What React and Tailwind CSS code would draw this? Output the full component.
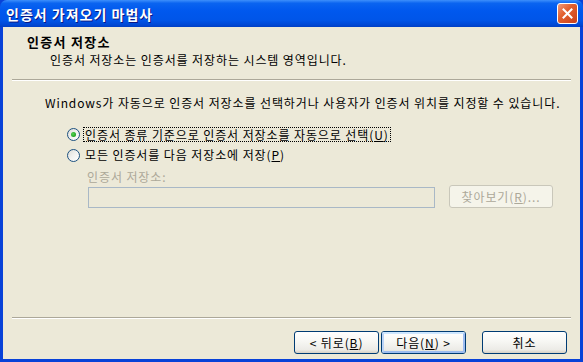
import React from "react";

function Radio({ checked }) {
  return (
    <span className="relative inline-flex items-center justify-center w-[13px] h-[13px] rounded-full border border-[#1C5180] bg-[linear-gradient(135deg,#DCDCD7_0%,#F2F2F0_50%,#FFFFFF_100%)] shrink-0">
      {checked && (
        <span className="w-[5px] h-[5px] rounded-full bg-[radial-gradient(circle_at_40%_40%,#55D455_0%,#21A121_70%,#1A8A1A_100%)]" />
      )}
    </span>
  );
}

function XPButton({ children, isDefault, disabled, className = "" }) {
  if (disabled) {
    return (
      <div
        className={`h-[23px] rounded-[3px] border border-[#C9C7BA] bg-[#F5F4EA] flex items-center justify-center text-[#ACA899] ${className}`}
      >
        {children}
      </div>
    );
  }
  return (
    <div
      className={`h-[23px] rounded-[3px] border border-[#003C74] bg-[linear-gradient(180deg,#FFFFFF_0%,#F8F8F5_40%,#ECEBE6_85%,#D6D0C5_100%)] flex items-center justify-center text-black ${className}`}
    >
      {isDefault ? (
        <div className="w-full h-full rounded-[2px] border-2 border-[#9DBCF0] border-t-[#CEE7FF] border-l-[#BCD4F6] flex items-center justify-center">
          {children}
        </div>
      ) : (
        children
      )}
    </div>
  );
}

export default function App() {
  return (
    <div className="w-[583px] h-[362px] flex flex-col bg-[#0842D8] font-['Noto_Sans_CJK_KR','Gulim',sans-serif] text-[12px] leading-[14px] tracking-[0.9px] text-black select-none">
      {/* Title bar */}
      <div className="h-[27px] shrink-0 flex items-center pl-[6px] pr-[5px] rounded-t-[7px] bg-[linear-gradient(180deg,#3D8FFB_0%,#0A64F0_12%,#0058EE_40%,#0055E8_75%,#0048D4_92%,#003FC4_100%)]">
        <span className="text-white font-bold text-[14px] leading-[16px] tracking-[1px] [text-shadow:1px_1px_0_#0A1883]">
          인증서 가져오기 마법사
        </span>
        <div className="ml-auto w-[21px] h-[21px] rounded-[3px] border border-white bg-[linear-gradient(135deg,#F09A7C_0%,#E2602F_40%,#C8401A_100%)] flex items-center justify-center">
          <svg width="11" height="11" viewBox="0 0 11 11">
            <path d="M1.5 1.5 L9.5 9.5 M9.5 1.5 L1.5 9.5" stroke="white" strokeWidth="2" strokeLinecap="square" />
          </svg>
        </div>
      </div>

      {/* Client area */}
      <div className="flex-1 mx-[3px] mb-[3px] bg-[#ECE9D8] flex flex-col">
        {/* Header */}
        <div className="h-[52px] shrink-0 pt-[8px] flex flex-col">
          <div className="pl-[24px] font-bold text-[13px] leading-[14px] tracking-[1.3px]">인증서 저장소</div>
          <div className="pl-[47px] mt-[4px]">인증서 저장소는 인증서를 저장하는 시스템 영역입니다.</div>
        </div>
        <div className="mx-[9px] h-[2px] border-t border-t-[#ACA899] border-b border-b-white shrink-0" />

        {/* Content */}
        <div className="flex-1 flex flex-col pt-[15px]">
          <div className="pl-[42px]">
            Windows가 자동으로 인증서 저장소를 선택하거나 사용자가 인증서 위치를 지정할 수 있습니다.
          </div>
          <div className="mt-[16px] pl-[64px] h-[16px] flex items-center">
            <Radio checked />
            <span className="ml-[3px] px-[1px] border border-dotted border-black leading-[13px]">
              인증서 종류 기준으로 인증서 저장소를 자동으로 선택(<u>U</u>)
            </span>
          </div>
          <div className="mt-[5px] pl-[64px] h-[16px] flex items-center">
            <Radio />
            <span className="ml-[4px] px-[1px]">모든 인증서를 다음 저장소에 저장(<u>P</u>)</span>
          </div>
          <div className="mt-[7px] pl-[84px] text-[#ACA899]">인증서 저장소:</div>
          <div className="mt-[1px] pl-[85px] flex items-end">
            <div className="w-[347px] h-[21px] border border-[#A9B8C6] bg-[#ECE9D8]" />
            <XPButton disabled className="ml-[14px] w-[104px]">
              <span>찾아보기(<u>R</u>)...</span>
            </XPButton>
          </div>
        </div>

        <div className="mx-[9px] h-[2px] border-t border-t-[#ACA899] border-b border-b-white shrink-0" />

        {/* Buttons */}
        <div className="shrink-0 mt-[12px] mb-[5px] flex justify-end pr-[13px]">
          <XPButton className="w-[85px]">
            <span>&lt; 뒤로(<u>B</u>)</span>
          </XPButton>
          <XPButton isDefault className="w-[85px] ml-[2px]">
            <span>다음(<u>N</u>) &gt;</span>
          </XPButton>
          <XPButton className="w-[85px] ml-[16px]">
            <span>취소</span>
          </XPButton>
        </div>
      </div>
    </div>
  );
}
